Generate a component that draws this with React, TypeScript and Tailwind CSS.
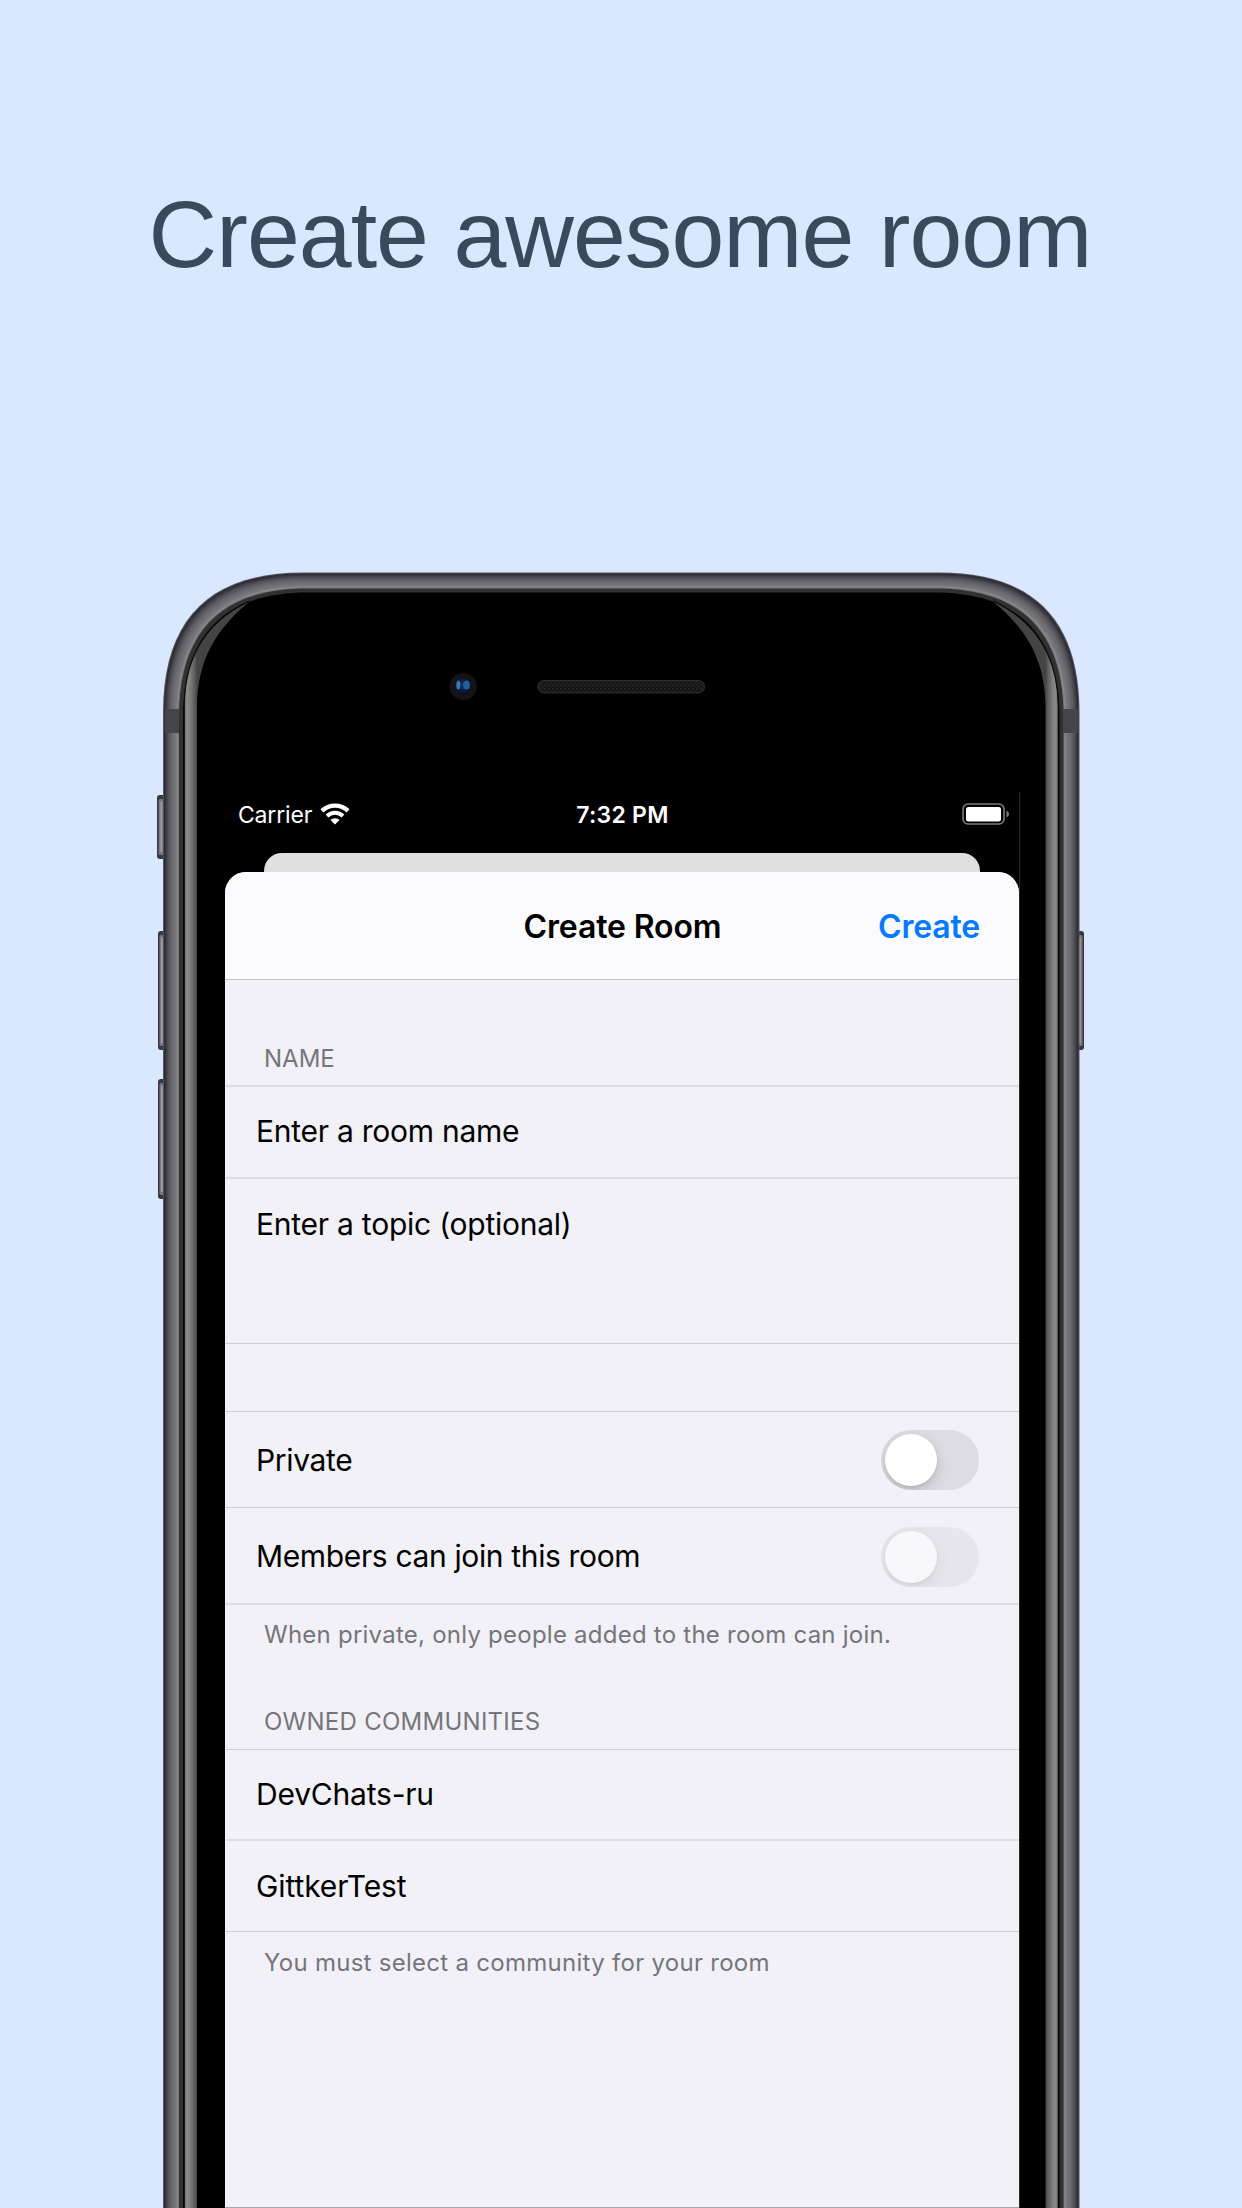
import React from "react";

const W = 1242;
const H = 2208;

/* Outline of the handset, inset evenly from its outer edge. */
function body(inset: number) {
  const l = 163 + inset;
  const r = 1079.5 - inset;
  const t = 572.5 + inset;
  const R = 140 - inset * 0.75;
  const k = R * 0.333;
  return `M${l} ${H + 4}V${t + R}C${l} ${t + k} ${l + k} ${t} ${l + R} ${t}H${r - R}C${r - k} ${t} ${r} ${t + k} ${r} ${t + R}V${H + 4}Z`;
}

const METAL = [
  "#55535c", "#2d2c33", "#35343b", "#403f46", "#4a4950", "#535259", "#5a5960", "#616067",
  "#67656c", "#6c6a71", "#706e74", "#747277", "#77757a", "#7d7b80", "#8b898d", "#747377",
];

function Glass({ flip = false }: { flip?: boolean }) {
  return (
    <g transform={flip ? `translate(1242.5 0) scale(-1 1)` : undefined}>
      <path
        d="M184.5 2212V705C185 660 203 624 249.500 601.500C216 629 197.500 660 197 706V2212Z"
        fill="url(#glass)"
      />
      <path d="M184.200 2212V705C185 658 205 622 249 601" fill="none" stroke="#0c0c0c" strokeWidth="1.2" />
    </g>
  );
}

function SideButton({ x, y, w, h }: { x: number; y: number; w: number; h: number }) {
  return (
    <g>
      <rect x={x} y={y} width={w} height={h} rx="3" fill="#38373d" />
      <rect x={x + 1.5} y={y + 4} width={w - 3} height={h - 8} rx="1.5" fill="#79777d" />
      <rect x={x + w / 2 - 1} y={y + 7} width="1.600" height={h - 14} fill="#a19fa4" />
    </g>
  );
}

function Handset() {
  return (
    <svg className="absolute inset-0" width={W} height={H} viewBox={`0 0 ${W} ${H}`} aria-hidden="true">
      <defs>
        <linearGradient id="glass" gradientUnits="userSpaceOnUse" x1="184.500" x2="197" y1="0" y2="0">
          <stop offset="0" stopColor="#777" />
          <stop offset="0.250" stopColor="#8a8a89" />
          <stop offset="0.550" stopColor="#757574" />
          <stop offset="0.880" stopColor="#555554" />
          <stop offset="1" stopColor="#444" />
        </linearGradient>
        <radialGradient id="lens" cx="0.5" cy="0.4" r="0.6">
          <stop offset="0" stopColor="#123a66" />
          <stop offset="1" stopColor="#060c20" />
        </radialGradient>
        <pattern id="mesh" width="4" height="4" patternUnits="userSpaceOnUse">
          <rect width="4" height="4" fill="#151515" />
          <rect width="1.500" height="1.500" fill="#2b2b2b" />
          <rect x="2" y="2" width="1.500" height="1.500" fill="#222" />
        </pattern>
      </defs>
      <SideButton x={157} y={795} w={9} h={64} />
      <SideButton x={158} y={931} w={8} h={119} />
      <SideButton x={158} y={1079} w={8} h={120} />
      <SideButton x={1076} y={931} w={8} h={119} />
      {METAL.map((c, i) => (
        <path key={i} d={body(i)} fill={c} />
      ))}
      <rect x="164.500" y="709" width="14.500" height="24" fill="#434549" />
      <rect x="1063.500" y="709" width="14.500" height="24" fill="#434549" />
      <path d={body(16)} fill="#303130" />
      <path d={body(20)} fill="#000" />
      <Glass />
      <Glass flip />
      <circle cx="463.300" cy="686.500" r="13.500" fill="#141416" />
      <circle cx="463.300" cy="686.500" r="8" fill="url(#lens)" />
      <ellipse cx="458.300" cy="685" rx="2" ry="4.500" fill="#3779b4" />
      <ellipse cx="466.500" cy="685" rx="3.300" ry="4.500" fill="#22619f" />
      <rect x="538" y="680.500" width="166.500" height="12.500" rx="6.250" fill="url(#mesh)" stroke="#303030" strokeWidth="1.200" />
    </svg>
  );
}

function Wifi() {
  return (
    <svg className="mb-[3px]" width="30" height="22" viewBox="0 0 30 22" fill="none">
      <path d="M1.900 7.900A18.800 18.800 0 0 1 28.100 7.900" stroke="#fff" strokeWidth="4.300" />
      <path d="M7 13A11.500 11.500 0 0 1 23 13" stroke="#fff" strokeWidth="3.900" />
      <path d="M15 21.500L10.400 17A6.600 6.600 0 0 1 19.600 17Z" fill="#fff" />
    </svg>
  );
}

function Battery() {
  return (
    <svg className="mb-[2px]" width="48" height="22" viewBox="0 0 48 22">
      <rect x="1" y="1" width="41" height="20" rx="5" fill="none" stroke="#7b7b7b" strokeWidth="1.600" />
      <rect x="4" y="4" width="35" height="14.500" rx="2.500" fill="#fff" />
      <path d="M44.500 7.500Q47 8.500 47 11T44.500 14.500Z" fill="#7b7b7b" />
    </svg>
  );
}

function Toggle({ disabled = false }: { disabled?: boolean }) {
  return (
    <div className={disabled ? "mt-[3px] opacity-50" : "mt-px"}>
      <div className="flex h-[60px] w-[98px] items-center overflow-hidden rounded-full bg-[#dddce2] pl-1">
        <div className="size-[52px] rounded-full bg-white shadow-[0_5px_14px_rgba(0,0,0,0.15),0_2px_3px_rgba(0,0,0,0.08)]" />
      </div>
    </div>
  );
}

const HAIRLINE = "border-b border-[#cfced4]";
const SOFT_LINE = "border-b-2 border-[#dddce2]";

function Row({ className, children }: { className: string; children: React.ReactNode }) {
  return (
    <div className={`flex justify-between pl-[31px] pr-[40px] text-[30px] leading-[36px] whitespace-nowrap ${className}`}>
      {children}
    </div>
  );
}

function Caption({ className, children }: { className: string; children: React.ReactNode }) {
  return (
    <div className={`flex pl-[39px] text-[24px] leading-[28px] whitespace-nowrap text-[#76757b] ${className}`}>{children}</div>
  );
}

export default function App() {
  return (
    <div className="relative h-[2208px] w-[1242px] overflow-hidden bg-[#d9e7ff] font-['Inter',sans-serif] text-black">
      <Handset />
      <div className="relative flex h-full flex-col">
        <h1 className="h-[792px] pt-[180px] pr-[2px] text-center font-['Liberation_Sans',sans-serif] text-[95px] leading-[108px] tracking-[-0.950px] whitespace-nowrap text-[#3b495d]">
          Create awesome room
        </h1>
        <div className="ml-[225px] flex w-[795px] flex-1 flex-col border-r border-[#29292b]">
          <div className="mb-[15px] grid h-[46px] grid-cols-3 items-center pr-[9px] pl-[13px] text-[23px] leading-[28px] text-white">
            <div className="flex items-center gap-[8px]">
              <span className="tracking-[-0.180px]">Carrier</span>
              <Wifi />
            </div>
            <div className="pr-[3px] text-center font-semibold tracking-[0.250px]">7:32 PM</div>
            <div className="flex justify-end"><Battery /></div>
          </div>
          <div className="mx-[39px] h-[19px] rounded-t-[18px] bg-[#e0e0e0]" />
          <div className="flex flex-1 flex-col rounded-t-[21px] bg-[#f2f1f7]">
            <div className="grid h-[108px] grid-cols-3 items-center rounded-t-[21px] border-b border-[#c3c2c8] bg-[#fbfbfd] pt-[2px] pr-[39px] pl-[39px] text-[32px] font-semibold">
              <span />
              <span className="pl-px text-center tracking-[-0.120px] whitespace-nowrap">Create Room</span>
              <span className="text-right tracking-[-0.200px] text-[#067aff]">Create</span>
            </div>
            <div className={`flex h-[107px] flex-col justify-end pb-[12px] ${SOFT_LINE}`}>
              <Caption className="">NAME</Caption>
            </div>
            <Row className={`h-[92px] items-center pb-[2px] tracking-[-0.250px] ${SOFT_LINE}`}>Enter a room name</Row>
            <Row className={`h-[165px] pt-[27px] tracking-[-0.240px] ${HAIRLINE}`}>Enter a topic (optional)</Row>
            <div className={`h-[68px] ${HAIRLINE}`} />
            <Row className={`h-[96px] items-center tracking-[-0.350px] ${HAIRLINE}`}>Private<Toggle /></Row>
            <Row className={`h-[97px] items-center tracking-[-0.360px] ${SOFT_LINE}`}>Members can join this room<Toggle disabled /></Row>
            <Caption className="h-[88px] pt-[16px] tracking-[0.240px]">When private, only people added to the room can join.</Caption>
            <Caption className={`h-[57px] pt-[15px] tracking-[0.260px] ${HAIRLINE}`}>OWNED COMMUNITIES</Caption>
            <Row className={`h-[91px] items-center pb-px tracking-[-0.200px] ${SOFT_LINE}`}>DevChats-ru</Row>
            <Row className={`h-[91px] items-center pb-px tracking-[-0.100px] ${HAIRLINE}`}>GittkerTest</Row>
            <Caption className="flex-1 border-b border-[#a9a8ad] pt-[17px] tracking-[0.280px]">You must select a community for your room</Caption>
          </div>
        </div>
      </div>
    </div>
  );
}
